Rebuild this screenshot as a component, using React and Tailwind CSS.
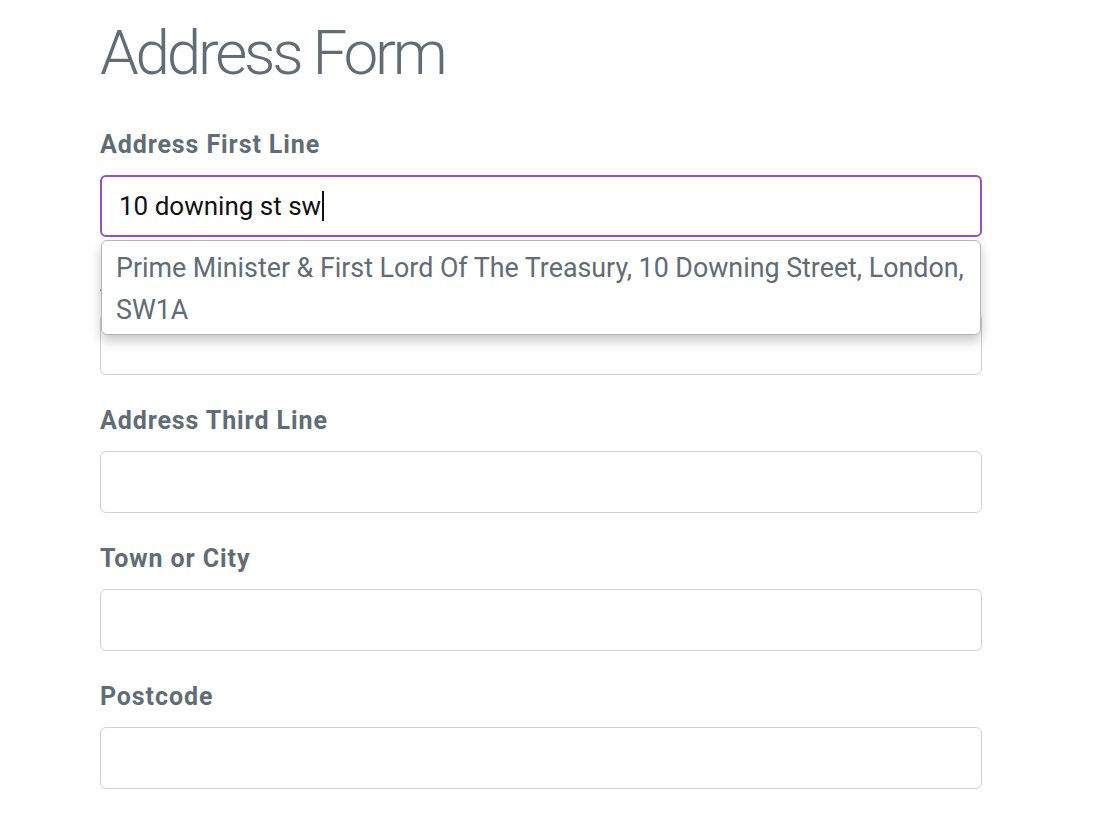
const fields = ["Address Third Line", "Town or City", "Postcode"];

const Field = ({ label, children }) => (
  <div className="mb-[31px]">
    <label className="block text-[25px] leading-[30px] font-bold tracking-[0.9px] text-[#606c76] mb-[15px]">
      {label}
    </label>
    {children}
  </div>
);

const EmptyInput = () => (
  <input
    type="text"
    className="block w-full h-[62px] rounded-[6px] border border-[#d1d1d1] bg-white px-[18px] text-[26px] outline-none"
  />
);

export default function App() {
  return (
    <div
      className="min-h-[836px] bg-white pl-[100px] pt-[13px]"
      style={{ fontFamily: "Roboto, 'Liberation Sans', sans-serif" }}
    >
      <div className="w-[882px]">
        <h1 className="text-[62px] leading-[79px] font-light text-[#606c76] tracking-[-3.2px] mb-[38px]">
          Address Form
        </h1>

        <Field label="Address First Line">
          <div className="relative">
            <div className="flex items-center h-[62px] rounded-[6px] border-2 border-[#9b4dca] bg-white px-[17px] text-[26px] text-[#111]">
              <span>10 downing st sw</span>
              <span className="ml-[1px] inline-block w-[2px] h-[30px] bg-[#111]" />
            </div>
            <div className="absolute left-[1px] right-[1px] top-[65px] z-10 rounded-[6px] border border-[#b5b5b5] bg-white pl-[14px] pr-[4px] pt-[6px] pb-[3px] text-[26.8px] leading-[42px] text-[#606c76] shadow-[0_6px_12px_rgba(0,0,0,0.22)]">
              Prime Minister &amp; First Lord Of The Treasury, 10 Downing Street, London, SW1A
            </div>
          </div>
        </Field>

        <Field label="Address Second Line">
          <EmptyInput />
        </Field>

        {fields.map((f) => (
          <Field key={f} label={f}>
            <EmptyInput />
          </Field>
        ))}
      </div>
    </div>
  );
}
